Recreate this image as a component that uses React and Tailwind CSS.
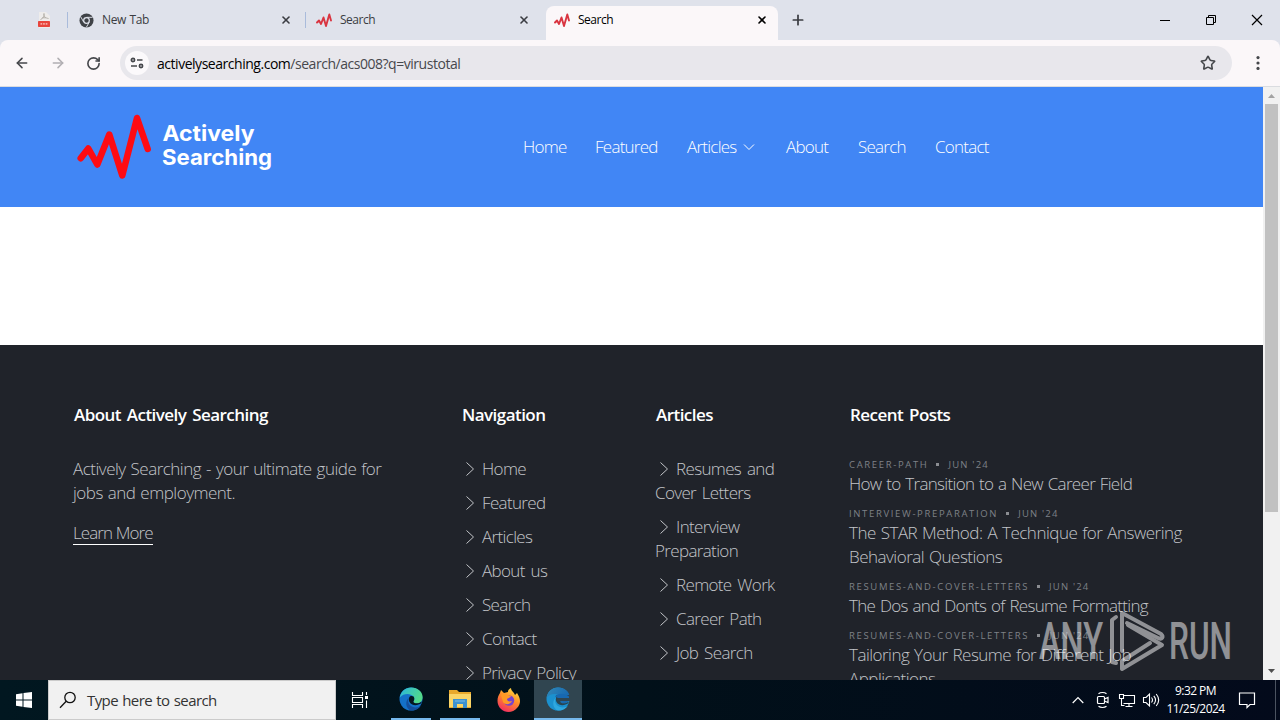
import React from "react";
import { ArrowLeft, ArrowRight, RotateCw, Star, X, Plus } from "lucide-react";

const menu = ["Home", "Featured", "Articles", "About", "Search", "Contact"];
const menuWidths = ["w-[72px]", "w-[92px]", "w-[99px]", "w-[72px]", "w-[77px]", "w-[60px]"];

const navigation = ["Home", "Featured", "Articles", "About us", "Search", "Contact", "Privacy Policy"];
const articles = ["Resumes and Cover Letters", "Interview Preparation", "Remote Work", "Career Path", "Job Search"];

const posts = [
  { tag: "career-path", title: "How to Transition to a New Career Field", tracking: "tracking-[-0.68px]" },
  { tag: "interview-preparation", title: "The STAR Method: A Technique for Answering Behavioral Questions", tracking: "tracking-[-0.5px]" },
  { tag: "resumes-and-cover-letters", title: "The Dos and Donts of Resume Formatting", tracking: "tracking-[-0.7px]" },
  { tag: "resumes-and-cover-letters", title: "Tailoring Your Resume for Different Job Applications", tracking: "tracking-[-0.52px]" },
];

function Pulse({ className }) {
  return (
    <svg viewBox="0 0 16 16" className={className} fill="none" stroke="#d93440" strokeWidth="1.9" strokeLinecap="round" strokeLinejoin="round">
      <path d="M1 10.5 L3 8.5 L5 12 L7.5 5.5 L10 14 L13.3 2.5 L15 8.5" />
    </svg>
  );
}

function PdfIcon() {
  return (
    <svg viewBox="0 0 16 16" className="w-4 h-4">
      <path d="M3 0h7l4 4v12H3z" fill="#eeeceb" />
      <path d="M8 1.5c-.7 2.500 1 4.500 4.500 5M8 1.500c.7 3-1 5-3.500 6M6 5.800h4" stroke="#b5b1aa" fill="none" />
      <rect x="2" y="9" width="12" height="6" rx=".7" fill="#e8453c" />
      <path d="M4.500 11.900h7" stroke="#f6a9a3" strokeWidth="1.700" strokeDasharray="1.700 .9" />
    </svg>
  );
}

function ChromeIcon() {
  return (
    <svg viewBox="0 0 16 16" className="w-[15px] h-[15px]">
      <circle cx="8" cy="8" r="7.5" fill="#3f4247" />
      <circle cx="8" cy="8" r="3" fill="#3f4247" stroke="#dfe2eb" strokeWidth="1.3" />
      <path d="M8 4.6h6.500M5 9.700 1.800 4M10.900 9.800 7.800 15.300" stroke="#dfe2eb" strokeWidth="1" />
    </svg>
  );
}

function TabStrip() {
  return (
    <div className="h-10 flex items-center bg-[#dfe2eb] text-[12px] text-[#3b3d42]">
      <div className="w-[67px] pl-[36px]"><PdfIcon /></div>
      <div className="w-px h-4 bg-[#a9bbdb]" />
      <div className="w-[237px] flex items-center pl-[11px] pr-[13px]">
        <ChromeIcon />
        <span className="ml-2 flex-1 tracking-[-0.4px] [word-spacing:1px]">New Tab</span>
        <X className="w-3 h-3" strokeWidth={3.2} />
      </div>
      <div className="w-px h-4 bg-[#a9bbdb]" />
      <div className="w-[240px] flex items-center pl-[10px] pr-4">
        <Pulse className="w-4 h-4" />
        <span className="ml-2 flex-1 tracking-[-0.5px]">Search</span>
        <X className="w-3 h-3" strokeWidth={3.2} />
      </div>
      <div className="w-[232px] h-[34px] self-end pb-[6px] flex items-center pl-2 pr-[10px] rounded-t-lg bg-[#fbf7f9] text-black">
        <Pulse className="w-4 h-4" />
        <span className="ml-2 flex-1 tracking-[-0.5px]">Search</span>
        <X className="w-3 h-3" strokeWidth={3.2} />
      </div>
      <Plus className="w-4 h-4 ml-3" strokeWidth={2.6} />
      <div className="ml-auto flex text-black">
        <svg viewBox="0 0 46 40" className="w-[46px] h-10" stroke="currentColor"><path d="M18 20.5h10" /></svg>
        <svg viewBox="0 0 46 40" className="w-[46px] h-10" stroke="currentColor" fill="none"><path d="M18.5 17.5h7v7h-7zM20.5 17v-1.5h7v7H26" /></svg>
        <svg viewBox="0 0 46 40" className="w-[46px] h-10" stroke="currentColor" strokeWidth="1.2"><path d="M18 15l10 10M28 15 18 25" /></svg>
      </div>
    </div>
  );
}

function Toolbar() {
  return (
    <div className="bg-[#dfe2eb]">
      <div className="h-[47px] rounded-t-lg bg-[#fbf7f9] border-b border-[#dadce0] flex items-center text-[#45474b]">
        <ArrowLeft className="w-4 h-4 ml-[14px]" strokeWidth={2.3} />
        <ArrowRight className="w-4 h-4 ml-5 text-[#b1afb3]" strokeWidth={2.3} />
        <RotateCw className="w-[15px] h-[15px] ml-5" strokeWidth={2.6} />
        <div className="ml-[19px] w-[1112px] h-[34px] rounded-full bg-[#e8e7ec] flex items-center">
          <div className="ml-[5px] w-6 h-6 rounded-full bg-[#fbf9fb] flex items-center justify-center">
            <svg viewBox="0 0 14 12" className="w-[14px] h-3" fill="none" stroke="currentColor" strokeWidth="1.7">
              <circle cx="3" cy="3" r="1.6" /><path d="M7 3h5.5M1 9h6" /><circle cx="11" cy="9" r="1.6" />
            </svg>
          </div>
          <span className="ml-2 text-[14px] tracking-[-0.47px] text-[#47484d]"><span className="text-black">activelysearching.com</span>/search/acs008?q=virustotal</span>
          <Star className="w-4 h-4 ml-auto mr-4" strokeWidth={2.4} />
        </div>
        <svg viewBox="0 0 4 16" className="w-1 h-4 ml-6" fill="currentColor">
          <circle cx="2" cy="2.6" r="1.6" /><circle cx="2" cy="8" r="1.6" /><circle cx="2" cy="13.4" r="1.6" />
        </svg>
      </div>
    </div>
  );
}

function SiteHeader() {
  return (
    <header className="h-[120px] bg-[#4186f5] flex items-center">
      <svg viewBox="0 0 210 80" className="w-[210px] h-20 ml-[73px] shrink-0">
        <path d="M7.7 51.3 L15.3 41.5 L24.3 57.5 L36.3 27.5 L49.3 68.5 L64 11 L74.7 42" fill="none" stroke="#fe0b12" strokeWidth="6.5" strokeLinecap="round" strokeLinejoin="round" />
        <g className="font-['Inter',sans-serif] font-bold text-[22px]" fill="#fff">
          <text x="89.5" y="34" textLength="92" lengthAdjust="spacingAndGlyphs">Actively</text>
          <text x="89" y="58" textLength="110" lengthAdjust="spacingAndGlyphs">Searching</text>
        </g>
      </svg>
      <nav className="flex ml-[240px] text-[17px] font-light tracking-[-0.75px] text-white">
        {menu.map((m, i) => (
          <a key={m} href="#" className={`flex items-center whitespace-nowrap ${menuWidths[i]}`}>
            {m}
            {m === "Articles" && (
              <svg viewBox="0 0 12 8" className="w-3 h-2 ml-[6px]" fill="none" stroke="currentColor"><path d="M1 1.5l5 5 5-5" /></svg>
            )}
          </a>
        ))}
      </nav>
    </header>
  );
}

function LinkList({ items }) {
  return (
    <ul className="tracking-[-0.65px] [word-spacing:2px]">
      {items.map((item) => (
        <li key={item} className="mb-[10px]">
          <svg viewBox="0 0 10 16" className="inline-block align-[-2px] w-[10px] h-4 ml-1 mr-[7px]" fill="none" stroke="currentColor"><path d="M1.5 1.5 L8.5 8 L1.5 14.5" /></svg>
          {item}
        </li>
      ))}
    </ul>
  );
}

function Column({ title, className, children }) {
  return (
    <div className={className}>
      <h4 className="h-6 mb-[30px] pl-px font-semibold tracking-[-0.55px] [word-spacing:2px] text-white whitespace-nowrap">{title}</h4>
      {children}
    </div>
  );
}

function SiteFooter() {
  return (
    <footer className="h-[335px] overflow-hidden bg-[#20232a] pt-[58px] pl-[73px] grid grid-cols-[388px_194px_194px_388px] text-[17px] leading-6 font-light tracking-[-0.5px] text-[#c3c5c9]">
      <Column title="About Actively Searching" className="pr-16">
        <p className="mb-4 [word-spacing:1px]">Actively Searching - your ultimate guide for jobs and employment.</p>
        <a href="#" className="inline-block h-6 border-b border-white leading-6 tracking-[-0.9px]">Learn More</a>
      </Column>
      <Column title="Navigation" className="pr-6"><LinkList items={navigation} /></Column>
      <Column title="Articles" className="pr-10"><LinkList items={articles} /></Column>
      <Column title="Recent Posts" className="pr-6">
        {posts.map((p) => (
          <div key={p.title} className="mb-[10px]">
            <div className="h-[15px] flex items-center text-[9.5px] leading-[15px] font-normal uppercase tracking-[1.65px] text-[#7e8187]">
              {p.tag}
              <span className="w-[3px] h-[3px] ml-[8px] mr-[9px] bg-[#8b8d92]" />
              <span className="tracking-[1.2px]">Jun '24</span>
            </div>
            <div className={`[word-spacing:1px] ${p.tracking}`}>{p.title}</div>
          </div>
        ))}
      </Column>
    </footer>
  );
}

function Scrollbar() {
  return (
    <div className="w-[17px] bg-[#f1f1f1] flex flex-col items-center">
      <svg viewBox="0 0 17 17" className="w-[17px] h-[17px]"><path d="M5 11h7l-3.5-4z" fill="#a3a3a3" /></svg>
      <div className="w-[13px] h-[408px] bg-[#c1c1c1]" />
      <svg viewBox="0 0 17 17" className="w-[17px] h-[17px] mt-auto"><path d="M5 6h7l-3.5 4z" fill="#505050" /></svg>
    </div>
  );
}

function Watermark() {
  return (
    <svg viewBox="0 0 200 70" className="absolute left-[1036px] top-[605px] w-[200px] h-[70px] opacity-50">
      <g className="font-['Roboto',sans-serif] font-medium text-[52px]" fill="#fff">
        <text x="3" y="54" textLength="64" lengthAdjust="spacingAndGlyphs">ANY</text>
        <text x="133" y="54" textLength="63" lengthAdjust="spacingAndGlyphs">RUN</text>
      </g>
      <g fill="none" stroke="#fff" strokeWidth="4" strokeLinecap="round" strokeLinejoin="round">
        <path d="M80 12 L76 15 V57 L80 58" />
        <path d="M86 46 V8 L125 29 C128 32 126 35 122 33 L91 18" />
        <path d="M92 20 L126 40 L86 64 V56 L114 38" />
      </g>
    </svg>
  );
}

function EdgeIcon({ dim }) {
  const [top, low, tip] = dim ? ["#1768b0", "#1b91cf", "#3188b7"] : ["#52d98a", "#1471c9", "#29b6df"];
  const id = dim ? "edge-dim" : "edge";
  return (
    <svg viewBox="0 0 24 24" className="w-6 h-6">
      <defs>
        <linearGradient id={id} x1="0" y1="0" x2="1" y2=".4"><stop stopColor={tip} /><stop offset="1" stopColor={top} /></linearGradient>
      </defs>
      <circle cx="12" cy="12" r="11.5" fill={low} />
      <path d="M.8 10.500C2 3.800 6.800.4 12.300.5 19 .6 23.600 5 23.600 10.200c0 3.800-2.700 6.200-6 6.200-2.400 0-3.600-1-3.200-1.900 1.100-1.600 1.300-3.200.1-4.900C11.600 5.900 4.400 6.100.8 10.500z" fill={`url(#${id})`} />
      <path d="M10.200 10.500c-2 2.700-1.200 7.300 3.300 9.300 3 1.300 6.200.4 8.400-1-2.200 3.300-6 5.100-10 4.700C7 22 5.300 14 10.200 10.500z" fill={dim ? "#2fa8df" : "#154f9d"} />
      <path d="M14.400 14.500c1.100-1.600 1.300-3.200.1-4.900-1.500-.9-3.500-.6-4.300.9-1 2.500.2 5.500 3 7 3 1.300 6.500.5 9-1.200l.6-1.800c-3 2.600-8.700 2.300-8.400 0z" fill={dim ? "#294451" : "#06161f"} />
      {dim && <path d="M10 8h14v6H11z" fill="#304550" />}
      {dim && <path d="M9 9.500c3-4 10-3.500 14 0v1.500H12z" fill="#1768b0" />}
    </svg>
  );
}

function ExplorerIcon() {
  return (
    <svg viewBox="0 0 24 24" className="w-6 h-6">
      <path d="M1 3h8l2 2h12v16H1z" fill="#e9a92c" />
      <path d="M1 7h22v13H1z" fill="#fbd567" />
      <path d="M5 12h14v9h-4v-4H9v4H5z" fill="#3d91cf" />
      <path d="M7 14h10" stroke="#7cbde7" />
    </svg>
  );
}

function FirefoxIcon() {
  return (
    <svg viewBox="0 0 24 24" className="w-6 h-6">
      <defs>
        <linearGradient id="fox" x1=".8" y1="0" x2=".3" y2="1"><stop stopColor="#ffe145" /><stop offset=".45" stopColor="#ff9128" /><stop offset="1" stopColor="#f32d61" /></linearGradient>
      </defs>
      <path d="M3 5l1-3 3 3 4-1c0-2 1-3 3-4 0 3 3 4 4 7l2-2c4 6 4 11 0 15-4 5-12 5-16 1C-1 16 0 9 3 5z" fill="url(#fox)" />
      <circle cx="12" cy="12.500" r="5.200" fill="#7543cf" />
      <path d="M4 7c2-2 5-2 7 0l3 1c-1 2-3 2-4 3 0 2 2 3 5 2-2 4-7 4-9 1z" fill="#ff9a25" />
    </svg>
  );
}

function Taskbar() {
  return (
    <div className="h-10 flex items-center bg-gradient-to-r from-[#011720] via-[#011019] to-[#030a1b] text-white">
      <div className="w-12 flex justify-center">
        <svg viewBox="0 0 16 16" className="w-4 h-4" fill="#fff"><path d="M0 2.2 6.5 1.3V7.5H0zM7.5 1.1 16 0v7.5H7.5zM0 8.5h6.5v6.2L0 13.8zM7.5 8.5H16V16l-8.5-1.1z" /></svg>
      </div>
      <div className="w-72 h-10 flex items-center bg-[#f1f1f1] border border-[#cbcbcb] text-[15px] text-[#333]">
        <svg viewBox="0 0 18 18" className="w-[18px] h-[18px] ml-[10px]" fill="none" stroke="#111" strokeWidth="1.3"><circle cx="11" cy="6.5" r="5.2" /><path d="M7.2 10.3 1 16.7" /></svg>
        <span className="ml-[10px] tracking-[-0.6px] [word-spacing:1px]">Type here to search</span>
      </div>
      <div className="w-[48px] flex justify-center">
        <svg viewBox="0 0 18 16" className="w-[18px] h-4" fill="none" stroke="#fff" strokeWidth="1.1"><path d="M1.5 0v3.5h10V0M1.5 16v-3.5h10V16M1.5 5.5h10v5h-10zM15.500 0v3M15.500 8.500V16" /><path d="M14 4h3v3h-3z" fill="#fff" stroke="none" /></svg>
      </div>
      <div className="ml-[7px] w-10 h-10 flex items-center justify-center border-b-2 border-[#76b9ed]"><EdgeIcon /></div>
      <div className="ml-[9px] w-10 h-10 flex items-center justify-center border-b-2 border-[#76b9ed]"><ExplorerIcon /></div>
      <div className="ml-[5px] w-[48px] flex justify-center"><FirefoxIcon /></div>
      <div className="ml-px w-12 h-10 flex items-center justify-center bg-[#304550] border-b-2 border-[#76b9ed]"><EdgeIcon dim /></div>
      <div className="ml-auto flex items-center">
        <svg viewBox="0 0 12 8" className="w-3 h-2" fill="none" stroke="#fff" strokeWidth="1.2"><path d="M.7 7 6 1.5 11.3 7" /></svg>
        <svg viewBox="0 0 14 18" className="w-[14px] h-[18px] ml-3" fill="none" stroke="#fff" strokeWidth="1.2"><rect x="1.5" y="5.5" width="7" height="7" rx="1" /><path d="M8.5 8 12 6.5v5L8.5 10M2.5 2.7c2-1.6 6-1.6 8 0M2.5 15.3c2 1.6 6 1.6 8 0" /></svg>
        <svg viewBox="0 0 18 16" className="w-[18px] h-4 ml-[8px]" fill="none" stroke="#fff" strokeWidth="1.1"><path d="M6 3.5h10.5v8H5.5M1.5 2.5h4v4h-4zM3.5 6.5v7h3M11 11.5v3M7.5 14.5h7" /></svg>
        <svg viewBox="0 0 18 16" className="w-[18px] h-4 ml-[6px]" fill="none" stroke="#fff" strokeWidth="1.1"><path d="M1.5 5.5h2.5L7.500 2v12L4 10.500H1.500zM9.500 5.500q2 2.500 0 5M11.800 3.800q3.500 4.200 0 8.400M14.200 2q5 6 0 12" /></svg>
        <div className="w-[70px] pl-px text-center text-[12px] leading-[18px] tracking-[-0.55px] whitespace-nowrap">
          <div>9:32 PM</div>
          <div>11/25/2024</div>
        </div>
        <svg viewBox="0 0 18 18" className="w-[18px] h-[18px] ml-2" fill="none" stroke="#fff" strokeWidth="1.2"><path d="M1.5 2h15v11.500H12L9 16.500V13.500H1.500z" /></svg>
        <div className="ml-[19px] mr-1 w-px h-10 bg-[#4b5360]" />
      </div>
    </div>
  );
}

export default function App() {
  return (
    <div className="relative w-[1280px] h-[720px] overflow-hidden bg-white font-['Open_Sans','Noto_Sans',sans-serif]">
      <TabStrip />
      <Toolbar />
      <div className="h-[593px] flex">
        <div className="w-[1263px]">
          <SiteHeader />
          <main className="h-[138px] bg-white" />
          <SiteFooter />
        </div>
        <Scrollbar />
      </div>
      <Taskbar />
      <Watermark />
    </div>
  );
}
